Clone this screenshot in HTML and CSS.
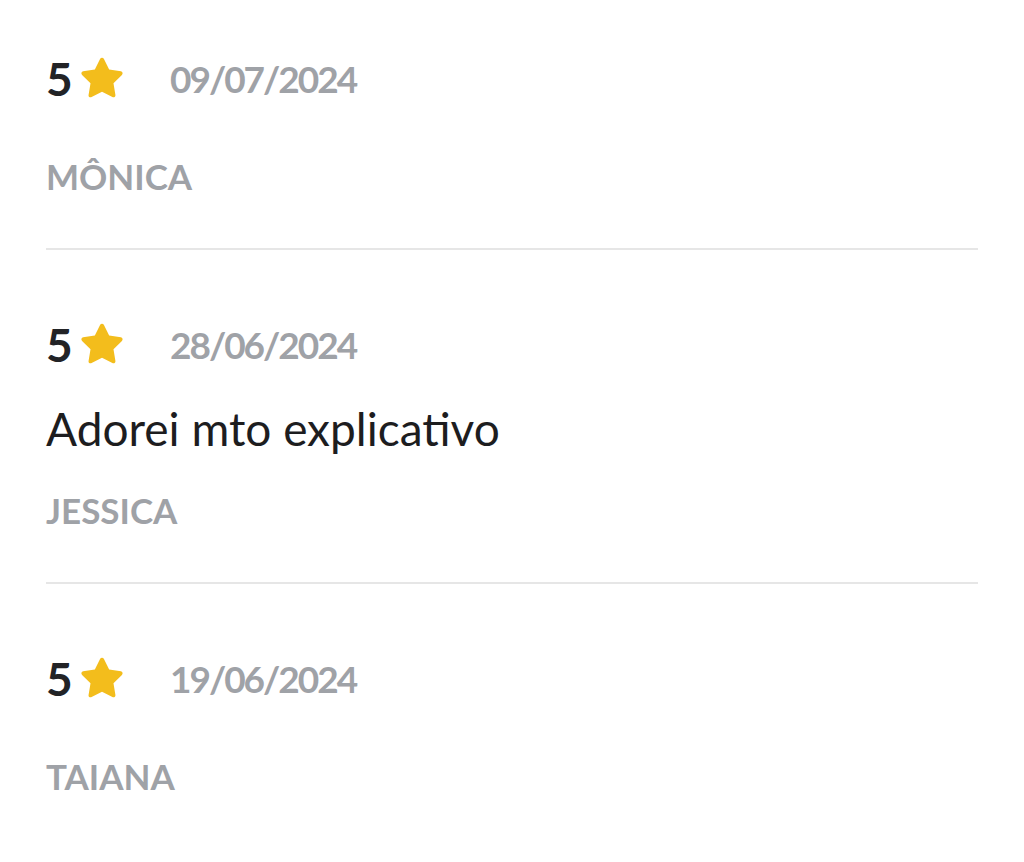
FILE: index.html
```html
<!DOCTYPE html>
<html lang="pt-BR">
<head>
    <meta charset="UTF-8">
    <title>Avaliações</title>
    <link rel="stylesheet" href="styles.css">
</head>
<body>
<div class="reviews">
    <div class="review first">
        <div class="review-head">
            <span class="score">5</span>
            <svg class="star" viewBox="0 0 24 24"><path d="M12 2.6c.4 0 .7.2.9.6l2.4 4.9 5.4.8c.8.1 1.1 1.1.5 1.7l-3.9 3.8.9 5.4c.1.8-.7 1.4-1.4 1l-4.8-2.5-4.8 2.5c-.7.4-1.6-.2-1.4-1l.9-5.4-3.9-3.8c-.6-.6-.3-1.6.5-1.7l5.4-.8 2.4-4.9c.2-.4.5-.6.9-.6z"/></svg>
            <span class="date">09/07/2024</span>
        </div>
        <div class="review-name">MÔNICA</div>
    </div>
    <div class="review">
        <div class="review-head">
            <span class="score">5</span>
            <svg class="star" viewBox="0 0 24 24"><path d="M12 2.6c.4 0 .7.2.9.6l2.4 4.9 5.4.8c.8.1 1.1 1.1.5 1.7l-3.9 3.8.9 5.4c.1.8-.7 1.4-1.4 1l-4.8-2.5-4.8 2.5c-.7.4-1.6-.2-1.4-1l.9-5.4-3.9-3.8c-.6-.6-.3-1.6.5-1.7l5.4-.8 2.4-4.9c.2-.4.5-.6.9-.6z"/></svg>
            <span class="date">28/06/2024</span>
        </div>
        <div class="review-text">Adorei mto explicativo</div>
        <div class="review-name">JESSICA</div>
    </div>
    <div class="review last">
        <div class="review-head">
            <span class="score">5</span>
            <svg class="star" viewBox="0 0 24 24"><path d="M12 2.6c.4 0 .7.2.9.6l2.4 4.9 5.4.8c.8.1 1.1 1.1.5 1.7l-3.9 3.8.9 5.4c.1.8-.7 1.4-1.4 1l-4.8-2.5-4.8 2.5c-.7.4-1.6-.2-1.4-1l.9-5.4-3.9-3.8c-.6-.6-.3-1.6.5-1.7l5.4-.8 2.4-4.9c.2-.4.5-.6.9-.6z"/></svg>
            <span class="date">19/06/2024</span>
        </div>
        <div class="review-name">TAIANA</div>
    </div>
</div>
</body>
</html>
```
FILE: styles.css
```css
body {
    margin: 0;
    background: #fff;
    font-family: Lato, "Noto Sans", sans-serif;
    color: #1d1d1f;
}
.reviews {
    padding: 0 46px;
}
.review {
    padding: 64px 0 48px;
    border-bottom: 2px solid #e6e6e6;
}
.review.first { padding-top: 48px; }
.review.last { border-bottom: none; }
.review-head {
    display: flex;
    align-items: center;
    height: 60px;
    margin-bottom: 25px;
}
.score {
    font-size: 46px;
    font-weight: 700;
    color: #222326;
    width: 30px;
}
.star {
    width: 52px;
    height: 52px;
    fill: #f3bd1c;
    margin-right: 42px;
}
.date {
    font-size: 37px;
    font-weight: 700;
    letter-spacing: -2px;
    color: #9fa2a7;
}
.review-text {
    font-size: 46px;
    line-height: 60px;
    margin-bottom: 27px;
}
.review-name {
    font-size: 35px;
    font-weight: 700;
    line-height: 48px;
    color: #9fa2a7;
}
.review-head + .review-name {
    margin-top: 44px;
}
```
